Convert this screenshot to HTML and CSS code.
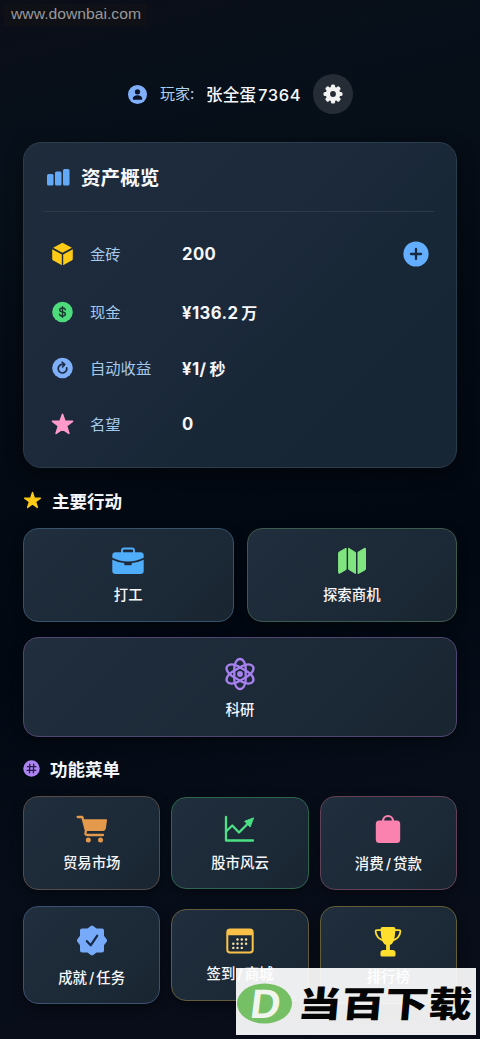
FILE: index.html
```html
<!DOCTYPE html>
<html lang="zh-CN">
<head>
<meta charset="utf-8">
<meta name="viewport" content="width=device-width">
<title>资产概览</title>
<link rel="stylesheet" href="styles.css">
</head>
<body>
<main class="app">
  <header class="player">
    <svg class="avatar" viewBox="0 0 18 18"><circle cx="9" cy="9" r="9" fill="#80b0fc"/><circle cx="9" cy="6.500" r="2.500" fill="#0c1528"/><path d="M4.500 13.200c0-2.400 2-3.500 4.500-3.500s4.500 1.100 4.500 3.500c0 .5-.2.700-.7.700H5.200c-.5 0-.7-.2-.7-.7z" fill="#0c1528"/></svg>
    <span class="player-label">玩家:</span>
    <span class="player-name">张全蛋<span class="num">7364</span></span>
    <span class="settings"><svg viewBox="0 0 20 20" width="20" height="20"><g fill="#f2f2f2"><rect x="7.900" y=".5" width="4.200" height="19" rx="1.500"/><rect x="7.900" y=".5" width="4.200" height="19" rx="1.500" transform="rotate(45 10 10)"/><rect x="7.900" y=".5" width="4.200" height="19" rx="1.500" transform="rotate(90 10 10)"/><rect x="7.900" y=".5" width="4.200" height="19" rx="1.500" transform="rotate(135 10 10)"/><circle cx="10" cy="10" r="7.300"/></g><circle cx="10" cy="10" r="2.900" fill="#252c36"/></svg></span>
  </header>

  <section class="assets">
    <h1 class="assets-title"><svg width="24" height="18" viewBox="0 0 24 18" fill="#62a9f7"><rect x="1" y="6" width="6.500" height="11.500" rx="1.500"/><rect x="9" y="3.500" width="6.500" height="14" rx="1.500"/><rect x="17" y="1" width="6.500" height="16.500" rx="1.500"/></svg>资产概览</h1>
    <div class="asset">
      <svg width="22" height="24" viewBox="0 0 22 24" fill="#fdca16"><path d="M11 .8 20.400 5.700 11 10.700 1.600 5.700z"/><path d="M.7 7.300 10.300 12.400V23.200L1.500 18.300Q.7 17.800.7 16.900z"/><path d="M21.300 7.300 11.700 12.400V23.200L20.500 18.300Q21.300 17.800 21.300 16.900z"/></svg>
      <span class="asset-label">金砖</span><span class="asset-value">200</span>
      <svg class="plus" width="26" height="26" viewBox="0 0 26 26"><circle cx="13" cy="13" r="12.600" fill="#64aeff"/><path d="M13 8v10M8 13h10" stroke="#162b40" stroke-width="2.300" stroke-linecap="round"/></svg>
    </div>
    <div class="asset asset-cash">
      <svg width="22" height="22" viewBox="0 0 22 22"><circle cx="11" cy="11" r="10.300" fill="#4edb7c"/><path d="M13.900 8.800C13.600 7.600 12.600 7 11 7S8.200 7.700 8.200 8.900c0 2.800 5.700 1.300 5.700 4.100 0 1.300-1.200 2.100-2.900 2.100s-2.800-.7-3.100-2M11 5.800v10.500" fill="none" stroke="#17382f" stroke-width="1.400" stroke-linecap="round"/></svg>
      <span class="asset-label">现金</span><span class="asset-value">¥136.2<span class="unit">万</span></span>
    </div>
    <div class="asset asset-income">
      <svg width="22" height="22" viewBox="0 0 22 22"><circle cx="11" cy="11" r="10.300" fill="#80affa"/><path d="M15.200 10.800A4.300 4.300 0 1 1 10.600 7.400H12.600" fill="none" stroke="#1b2b43" stroke-width="1.700" stroke-linecap="round"/><path d="M10.600 5.200l2.700 2.300-2.300 2.500" fill="none" stroke="#1b2b43" stroke-width="1.600" stroke-linecap="round" stroke-linejoin="round"/></svg>
      <span class="asset-label">自动收益</span><span class="asset-value">¥1/<span class="unit">秒</span></span>
    </div>
    <div class="asset asset-fame">
      <svg width="24" height="24" viewBox="0 0 24 24"><path d="M12 1.800l2.600 7.400h7.900l-6.200 4.800 2.400 7.900L12 17.300l-6.700 4.600L7.700 14 1.500 9.200h7.900z" fill="#ff9bcb" stroke="#ff9bcb" stroke-width="1.600" stroke-linejoin="round"/></svg>
      <span class="asset-label">名望</span><span class="asset-value">0</span>
    </div>
  </section>

  <h2 class="section-title actions-title"><svg width="19" height="20" viewBox="0 0 24 24"><path d="M12 2.500l2.400 7.200h7.600l-6.100 4.500 2.300 7.300L12 17l-6.200 4.500 2.300-7.300L2 9.700h7.600z" fill="#fdca16" stroke="#fdca16" stroke-width="1.700" stroke-linejoin="round"/></svg>主要行动</h2>
  <div class="actions">
    <div class="tile blue"><svg width="32" height="28" viewBox="0 0 32 28"><path d="M10 7V3.500q0-2 2-2h8q2 0 2 2V7" fill="none" stroke="#50adfa" stroke-width="1.900"/><path d="M3.500 5.300h25q3.200 0 3.200 3.200v2.300q-7 3.700-15.700 3.700T.3 10.800V8.500q0-3.200 3.200-3.200z" fill="#50adfa"/><path d="M.3 12.700q5.500 2.800 11.900 3.300v1.100q0 1.200 1.200 1.200h5.200q1.200 0 1.200-1.200V16q6.400-.5 11.900-3.300v11q0 3.200-3.200 3.200h-25q-3.200 0-3.200-3.200z" fill="#50adfa"/></svg><span>打工</span></div>
    <div class="tile green"><svg width="28" height="28" viewBox="0 0 28 28" fill="#80e57f" stroke="#80e57f" stroke-width="1" stroke-linejoin="round"><path d="M.6 6Q.6 5.300 1.300 4.900L8.100 1.200V22.500L1.800 26.200Q.6 26.700.6 25.500z"/><path d="M10.600 1.200 17.500 5.500V26.500L10.600 22.300z"/><path d="M20 5.300 26.500 1.300Q27.500.8 27.500 2V22Q27.500 22.700 26.900 23L20 26.700z"/></svg><span>探索商机</span></div>
    <div class="tile purple wide"><svg width="32" height="34" viewBox="0 0 32 34" fill="none" stroke="#a781ef" stroke-width="2.300"><rect x="10.300" y="2" width="11.400" height="30" rx="5.700" ry="9.500"/><rect x="10.300" y="2" width="11.400" height="30" rx="5.700" ry="9.500" transform="rotate(60 16 17)"/><rect x="10.300" y="2" width="11.400" height="30" rx="5.700" ry="9.500" transform="rotate(120 16 17)"/><circle cx="16" cy="17" r="2.900" fill="#a781ef" stroke="none"/></svg><span>科研</span></div>
  </div>

  <h2 class="section-title menu-title"><svg width="17" height="17" viewBox="0 0 18 18"><circle cx="9" cy="9" r="8.700" fill="#ad83ef"/><path d="M7.200 4.500l-.3 9M11.300 4.500l-.3 9M4.700 7.100h9M4.400 11H13.400" fill="none" stroke="#261d48" stroke-width="1.400" stroke-linecap="round"/></svg>功能菜单</h2>
  <div class="menu">
    <div class="tile orange"><svg width="32" height="28" viewBox="0 0 32 28" fill="#e49a4b"><path d="M1.700 2H6.300L9.900 15.500 9.500 18.300Q9.300 20 11 20H27" fill="none" stroke="#e49a4b" stroke-width="2.300" stroke-linecap="round" stroke-linejoin="round"/><path d="M7.300 4.200H30q1.200 0 1 1.200l-1.200 8.200q-.3 2.300-2.600 2.300H10.300z"/><circle cx="12.300" cy="25" r="2.500"/><circle cx="24.500" cy="25" r="2.500"/></svg><span>贸易市场</span></div>
    <div class="tile mint short"><svg width="31" height="28" viewBox="0 0 31 28" fill="none" stroke="#4ce184" stroke-width="2.300" stroke-linecap="round" stroke-linejoin="round"><path d="M2 2v23.500h27"/><path d="M2 16.500 8.300 10.500 15 17.500 26 6.500"/><path d="M29.300 3 20.700 6.300 25.900 11.700z" fill="#4ce184" stroke-width="1"/></svg><span>股市风云</span></div>
    <div class="tile pink"><svg width="26" height="30" viewBox="0 0 26 30"><path d="M8 7.500V7a5 5 0 0 1 10 0v.5" fill="none" stroke="#fb82af" stroke-width="2.200"/><rect x=".8" y="6.500" width="24.400" height="22.500" rx="3.500" fill="#fb82af"/></svg><span>消费<i>/</i>贷款</span></div>
    <div class="tile azure"><svg width="30" height="31" viewBox="0 0 30 31"><path d="M15 2.500 19 5.500H25V11.500L28 15.500 25 19.500V25.500H19L15 28.500 11 25.500H5V19.500L2 15.500 5 11.500V5.500H11z" fill="#77abfa" stroke="#77abfa" stroke-width="4" stroke-linejoin="round"/><path d="M9.900 16.200 13.700 20.300 20.100 10.800" fill="none" stroke="#172a46" stroke-width="2.300" stroke-linecap="round" stroke-linejoin="round"/></svg><span>成就<i>/</i>任务</span></div>
    <div class="tile gold short"><svg width="28" height="26" viewBox="0 0 28 26"><rect x="1.300" y="1.500" width="25.400" height="23" rx="2.800" fill="none" stroke="#fac149" stroke-width="2"/><path d="M1 7.300V4Q1 1 4 1h20q3 0 3 3v3.300z" fill="#fac149"/><g fill="#fbe3a6"><circle cx="11.500" cy="11.500" r="1.200"/><circle cx="15.800" cy="11.500" r="1.200"/><circle cx="20.100" cy="11.500" r="1.200"/><circle cx="7.300" cy="15.700" r="1.200"/><circle cx="11.500" cy="15.700" r="1.200"/><circle cx="15.800" cy="15.700" r="1.200"/><circle cx="20.100" cy="15.700" r="1.200"/><circle cx="7.300" cy="19.900" r="1.200"/><circle cx="11.500" cy="19.900" r="1.200"/><circle cx="15.800" cy="19.900" r="1.200"/></g></svg><span>签到<i>/</i>商城</span></div>
    <div class="tile yellow"><svg width="28" height="31" viewBox="0 0 28 31" fill="#ffdf2e"><path d="M8.500 1h11q2 0 2 2l-.7 7Q20 17.500 15.900 19v5h2.600q2.800 0 3 2.500v2.500q0 1.500-1.500 1.500h-12q-1.500 0-1.500-1.500v-2.500q.2-2.500 3-2.500h2.600V19Q8 17.500 7.200 10L6.500 3q0-2 2-2z"/><path d="M8 4.200H3Q1.500 4.200 1.600 5.500 2.300 12.500 9.700 14.600M20 4.200h5Q26.500 4.200 26.400 5.500 25.700 12.500 18.300 14.600" fill="none" stroke="#ffdf2e" stroke-width="1.800" stroke-linejoin="round"/></svg><span>排行榜</span></div>
  </div>
</main>
<div class="site-url"><svg width="132" height="19" viewBox="0 0 132 19"><text x="0" y="14.500" textLength="130" lengthAdjust="spacingAndGlyphs">www.downbai.com</text></svg></div>
<div class="site-logo">
  <svg width="240" height="67" viewBox="0 0 240 67"><ellipse cx="28.500" cy="35.500" rx="27.500" ry="20" fill="#75bf65"/><text class="logo-d" transform="translate(13 50) skewX(-7)" textLength="30" lengthAdjust="spacingAndGlyphs">D</text><text class="logo-name" transform="translate(61 49) skewX(-5) scale(1 .83)" textLength="174" lengthAdjust="spacingAndGlyphs">当百下载</text></svg>
</div>
</body>
</html>
```
FILE: styles.css
```css
* { box-sizing: border-box; }
body {
  margin: 0;
  height: 1039px;
  overflow: hidden;
  position: relative;
  color: #f5f7fa;
  font-family: Inter, "Noto Sans CJK SC", sans-serif;
  background: linear-gradient(165deg, #0c0e18 0%, #07101a 12%, #050b14 32%, #020812 58%, #070e19 78%, #090c19 100%);
}
svg { display: block; flex: none; }
.app { padding: 74px 23px 0; }
.player { display: flex; align-items: center; height: 40px; padding-left: 105px; }
.avatar { width: 19px; height: 19px; }
.player-label { margin-left: 13px; width: 46px; padding-bottom: 3px; font-size: 15px; color: #aed0ef; white-space: nowrap; }
.player-name { width: 107px; padding-bottom: 1px; font-size: 16.500px; font-weight: 500; white-space: nowrap; letter-spacing: .2px; }
.num { margin-left: 2px; letter-spacing: .6px; }
.settings { width: 40px; height: 40px; border-radius: 50%; background: #252c36; display: grid; place-items: center; }

.assets {
  margin-top: 28px;
  height: 326px;
  padding: 0 22px 0 20px;
  border: 1px solid #2b3c4b;
  border-radius: 18px;
  background: linear-gradient(135deg, #1f2c3c 0%, #1b293b 48%, #182735 64%, #172635 100%);
  box-shadow: 0 5px 18px #0007;
}
.assets-title {
  display: flex; align-items: center; gap: 11px;
  margin: 0 0 14px; height: 69px; padding: 0 0 1px 2px;
  border-bottom: 1px solid #2b3948;
  font-size: 19.600px; font-weight: 600;
}
.asset { height: 56px; display: flex; align-items: center; padding-left: 7px; }
.asset > svg:first-child { width: 23px; }
.asset-cash { height: 60px; }
.asset-income { height: 52px; }
.asset-fame { height: 60px; }
.asset-label { margin-left: 16px; width: 92px; padding-bottom: 3px; font-size: 15.300px; color: #a5c9ea; }
.asset-value { padding-bottom: 1px; font-size: 16.700px; font-weight: 650; letter-spacing: .4px; }
.unit { margin-left: 3px; font-size: 16px; }
.plus { margin-left: auto; margin-right: 5px; }

.section-title { display: flex; align-items: center; margin: 0; height: 26px; font-size: 17.500px; font-weight: 600; }
.actions-title { margin-top: 19px; gap: 10px; }
.menu-title { margin-top: 18px; gap: 10px; }
.actions { display: grid; grid-template-columns: 1fr 1fr; grid-template-rows: 94px 100px; gap: 15px 13px; margin-top: 15px; }
.tile {
  display: flex; flex-direction: column; align-items: center; justify-content: center; gap: 10px;
  padding-top: 2px;
  border: 1px solid;
  border-radius: 15px;
  background: linear-gradient(135deg, #202e3d, #1c2937 60%, #192631);
  box-shadow: 0 4px 12px #0006;
  font-size: 14.400px; font-weight: 500; line-height: 20px;
}
.tile i { font-style: normal; margin: 0 2px; }
.wide { grid-column: 1 / 3; gap: 9px; }
.menu { display: grid; grid-template-columns: repeat(3, 1fr); grid-template-rows: 95px 98px; gap: 16px 11px; margin-top: 14px; align-items: center; }
.menu .tile { height: 94px; }
.menu .short { height: 92px; }
.menu .azure, .menu .yellow { height: 98px; }
.menu .azure { gap: 12px; }
.blue { border-color: #37536b; }
.green { border-color: #3e594e; }
.purple { border-color: #51466f; }
.orange { border-color: #554b49; }
.mint { border-color: #2d6650; }
.pink { border-color: #614258; }
.azure { border-color: #3d5270; }
.gold { border-color: #635b3e; }
.yellow { border-color: #625f36; }

.site-url { position: absolute; left: 4px; top: 4px; width: 143px; height: 22px; padding-left: 7px; background: #101116; }
.site-url text { font: 15.500px "Liberation Sans", sans-serif; fill: #98999b; }
.site-logo { position: absolute; left: 236px; top: 968px; width: 240px; height: 67px; background: rgba(255, 255, 255, .92); }
.logo-d { font: bold 41px "Liberation Sans", sans-serif; fill: #f0f5ed; }
.logo-name { font: 900 43px "Noto Sans CJK SC", sans-serif; fill: #050505; }
```
